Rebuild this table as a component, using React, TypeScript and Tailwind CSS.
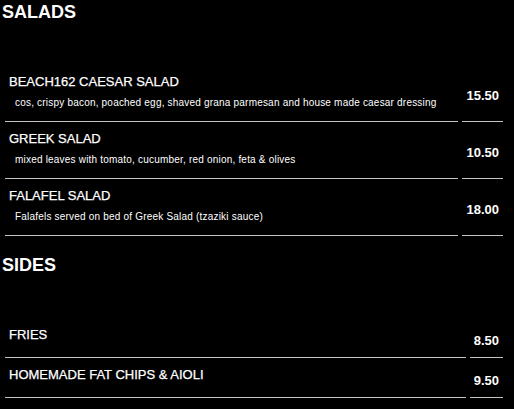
import React from "react";

type Item = { name: string; desc?: string; price: string };

const salads: Item[] = [
  {
    name: "BEACH162 CAESAR SALAD",
    desc: "cos, crispy bacon, poached egg, shaved grana parmesan and house made caesar dressing",
    price: "15.50",
  },
  {
    name: "GREEK SALAD",
    desc: "mixed leaves with tomato, cucumber, red onion, feta & olives",
    price: "10.50",
  },
  {
    name: "FALAFEL SALAD",
    desc: "Falafels served on bed of Greek Salad (tzaziki sauce)",
    price: "18.00",
  },
];

const sides: Item[] = [
  { name: "FRIES", price: "8.50" },
  { name: "HOMEMADE FAT CHIPS & AIOLI", price: "9.50" },
];

function Section({ title, items, rowH, titleMt, listMt }: { title: string; items: Item[]; rowH: string; titleMt: string; listMt: string }) {
  return (
    <section>
      <h2 className={`${titleMt} pl-[2px] text-[18px] leading-[21px] font-bold text-white`}>{title}</h2>
      <div className={`${listMt} ml-[5px] w-[498px] grid grid-cols-[1fr_auto] gap-x-[4px]`}>
        {items.map((it) => (
          <React.Fragment key={it.name}>
            <div className={`${rowH} border-b border-[#c4c4c4] pt-[9px] pl-[4px] flex flex-col`}>
              <div className="text-[13px] leading-[15px] text-white [-webkit-text-stroke:0.25px_white]">{it.name}</div>
              {it.desc && (
                <div className="mt-[8px] pl-[6px] text-[10px] leading-[12px] tracking-[0.2px] text-white">{it.desc}</div>
              )}
            </div>
            <div className={`${rowH} border-b border-[#c4c4c4] pt-[5px] px-[4px] flex items-center justify-end`}>
              <span className="text-[13px] leading-[15px] font-bold text-white">{it.price}</span>
            </div>
          </React.Fragment>
        ))}
      </div>
    </section>
  );
}

export default function App() {
  return (
    <div className="min-h-screen w-full bg-black overflow-hidden" style={{ fontFamily: '"Liberation Sans", Arial, sans-serif' }}>
      <div className="pt-[1px]">
        <Section title="SALADS" items={salads} rowH="h-[57px]" titleMt="mt-[1px]" listMt="mt-[42px]" />
        <Section title="SIDES" items={sides} rowH="h-[40px]" titleMt="mt-[19px]" listMt="mt-[42px]" />
      </div>
    </div>
  );
}
